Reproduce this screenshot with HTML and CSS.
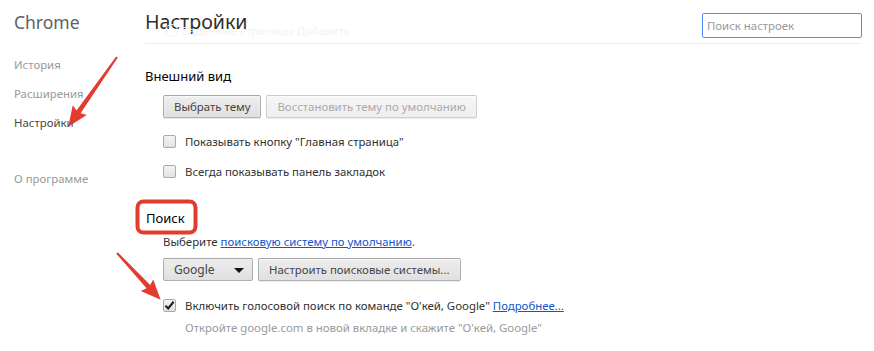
FILE: index.html
```html
<!DOCTYPE html>
<html>

<head>
    <meta charset='utf-8'>
    <title>Настройки</title>
    <link rel="stylesheet" href="styles.css">
</head>

<body>
    <div class="page">
        <nav class="sidebar">
            <div class="brand">Chrome</div>
            <ul class="nav-list">
                <li>История</li>
                <li>Расширения</li>
                <li class="selected">Настройки</li>
                <li class="nav-gap">О программе</li>
            </ul>
        </nav>

        <main class="main">
            <header class="page-header">
                <h1>Настройки</h1>
                <span class="ghost"><span class="ghost-radio"></span>Заданные страницы <span class="ghost-link">Добавить</span></span>
                <input class="search" type="text" placeholder="Поиск настроек">
            </header>

            <section class="section">
                <h3 class="section-title">Внешний вид</h3>
                <div class="button-row">
                    <button class="btn">Выбрать тему</button>
                    <button class="btn" disabled>Восстановить тему по умолчанию</button>
                </div>
                <div class="check-row">
                    <span class="checkbox"></span>
                    <span>Показывать кнопку "Главная страница"</span>
                </div>
                <div class="check-row">
                    <span class="checkbox"></span>
                    <span>Всегда показывать панель закладок</span>
                </div>
            </section>

            <section class="section search-section">
                <h3 class="section-title">Поиск</h3>
                <div class="text-row">Выберите <a href="#">поисковую систему по умолчанию</a>.</div>
                <div class="button-row">
                    <div class="select">Google<span class="caret"></span></div>
                    <button class="btn">Настроить поисковые системы...</button>
                </div>
                <div class="check-row">
                    <span class="checkbox checked">
                        <svg width="11" height="11" viewBox="0 0 11 11"><path d="M1.5 5.8 L4.2 8.4 L9.6 1.8" fill="none" stroke="#222" stroke-width="2.2"/></svg>
                    </span>
                    <span>Включить голосовой поиск по команде "О'кей, Google" <a href="#">Подробнее...</a></span>
                </div>
                <div class="hint">Откройте google.com в новой вкладке и скажите "О'кей, Google"</div>
            </section>
        </main>

        <svg class="marks" width="874" height="351" viewBox="0 0 874 351">
            <rect x="137.5" y="201.5" width="58" height="31" rx="6" fill="none" stroke="#e33b2e" stroke-width="4"/>
            <g transform="translate(117 57) rotate(125)">
                <path d="M0 -1 L67 -2.5 L65 -8.5 L85 0 L65 8.5 L67 2.5 L0 1 Z" fill="#e33b2e"/>
            </g>
            <g transform="translate(117 253) rotate(47)">
                <path d="M0 -1 L46 -2.5 L44 -8.5 L64 0 L44 8.5 L46 2.5 L0 1 Z" fill="#e33b2e"/>
            </g>
        </svg>
    </div>
</body>

</html>
```

FILE: styles.css
```css
body {
    margin: 0;
    font-family: "Noto Sans", "Open Sans", sans-serif;
    font-size: 11.4px;
    color: #303030;
    background: white;
}

.page {
    position: relative;
    display: flex;
    width: 874px;
    height: 351px;
    overflow: hidden;
}

.sidebar {
    width: 145px;
    flex-shrink: 0;
    padding-left: 14px;
    box-sizing: border-box;
}

.brand {
    font-size: 17.5px;
    color: #5c6166;
    line-height: 24px;
    margin-top: 10px;
}

.nav-list {
    list-style: none;
    margin: 16px 0 0;
    padding: 0;
}

.nav-list li {
    font-size: 11.4px;
    color: #999;
    line-height: 29px;
}

.nav-list li.selected {
    color: #464646;
}

.nav-list li.nav-gap {
    margin-top: 27px;
}

.main {
    flex: 1;
    padding-right: 12px;
}

.page-header {
    position: relative;
    display: flex;
    align-items: flex-start;
    justify-content: space-between;
    height: 43px;
    border-bottom: 1px solid #eee;
}

.page-header h1 {
    margin: 10px 0 0;
    font-size: 19.6px;
    font-weight: normal;
    line-height: 24px;
    color: #303030;
}

.ghost {
    position: absolute;
    left: 20px;
    top: 23px;
    font-size: 11.4px;
    color: #f3f3f3;
}

.ghost-link {
    color: #f0f3fa;
}

.ghost-radio {
    display: inline-block;
    width: 11px;
    height: 11px;
    border: 1px solid #f4f4f4;
    border-radius: 50%;
    margin-right: 4px;
    vertical-align: -2px;
}

.search {
    margin-top: 13px;
    width: 160px;
    height: 25px;
    box-sizing: border-box;
    border: 1px solid #4d90fe;
    border-radius: 2px;
    padding: 0 4px;
    font-family: inherit;
    font-size: 11.4px;
    outline: none;
}

.search::placeholder {
    color: #999;
}

.section-title {
    margin: 0 0 9px;
    font-size: 13px;
    font-weight: normal;
    line-height: 20px;
    color: #000;
}

.section {
    margin-top: 22px;
}

.search-section {
    margin-top: 22px;
}

.search-section .section-title {
    margin: 0 0 0 1px;
}

.button-row,
.check-row,
.text-row,
.hint {
    margin-left: 18px;
}

.button-row {
    display: flex;
    gap: 5px;
    height: 23px;
}

.btn {
    height: 23px;
    padding: 0 10px;
    border: 1px solid rgba(0, 0, 0, 0.25);
    border-radius: 2px;
    background: linear-gradient(#ededed, #e0e0e0);
    box-shadow: 0 1px 0 rgba(0, 0, 0, 0.08), inset 0 1px 2px rgba(255, 255, 255, 0.75);
    font-family: inherit;
    font-size: 11.4px;
    color: #444;
}

.btn:disabled {
    color: #aaa;
    background: linear-gradient(#f6f6f6, #eee);
    border-color: rgba(0, 0, 0, 0.15);
}

.select {
    position: relative;
    width: 90px;
    height: 23px;
    box-sizing: border-box;
    padding-left: 10px;
    line-height: 21px;
    border: 1px solid rgba(0, 0, 0, 0.25);
    border-radius: 2px;
    background: linear-gradient(#ededed, #e0e0e0);
    color: #444;
    font-size: 12px;
}

.caret {
    position: absolute;
    right: 8px;
    top: 9px;
    border-left: 5px solid transparent;
    border-right: 5px solid transparent;
    border-top: 5px solid #111;
}

.check-row {
    display: flex;
    align-items: center;
    gap: 9px;
    height: 30px;
}

.button-row + .check-row {
    margin-top: 8px;
}

.checkbox {
    display: flex;
    align-items: center;
    justify-content: center;
    width: 13px;
    height: 13px;
    box-sizing: border-box;
    border: 1px solid #aaa;
    border-radius: 2px;
    background: linear-gradient(#f4f4f4, #e2e2e2);
}

.text-row {
    line-height: 16px;
    margin-top: 6px;
    margin-bottom: 8px;
    color: #303030;
}

a {
    color: #15c;
}

.hint {
    margin-left: 40px;
    line-height: 16px;
    color: #999;
}

.search-section .button-row + .check-row {
    margin-top: 9px;
}

.marks {
    position: absolute;
    left: 0;
    top: 0;
    pointer-events: none;
}
```
